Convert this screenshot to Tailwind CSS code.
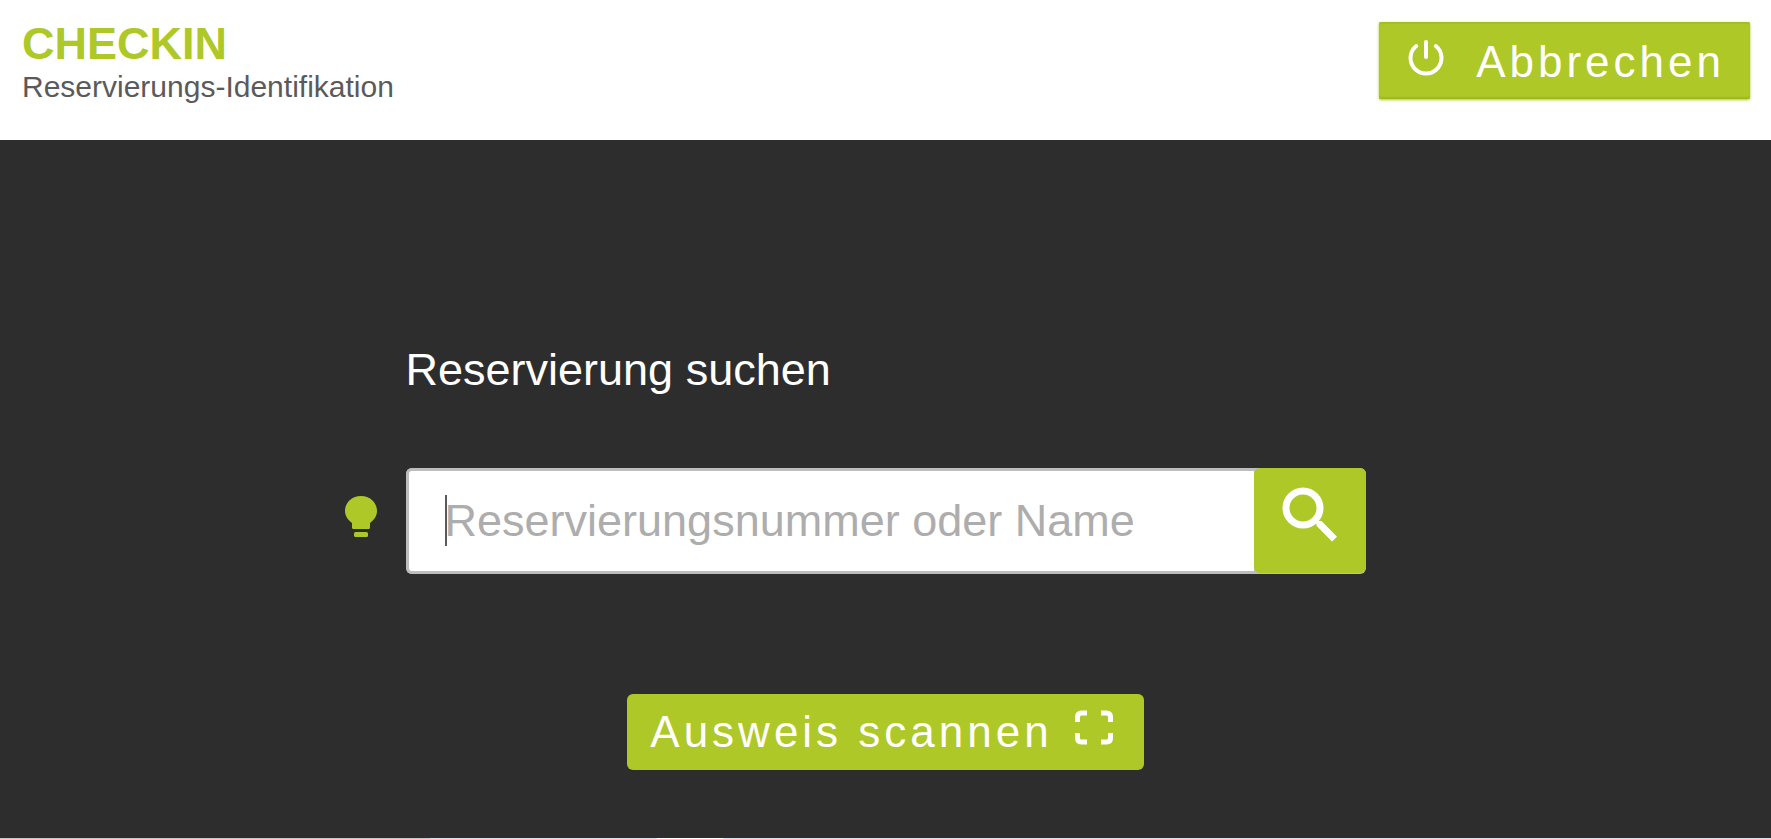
<!DOCTYPE html>
<html lang="de" class="h-full">
  <head>
    <meta charset="UTF-8" />
    <meta
      name="viewport"
      content="width=device-width, initial-scale=1.0" />
    <title>Checkin</title>

    <!-- tailwind -->
    <script src="https://cdn.jsdelivr.net/npm/@tailwindcss/browser@4"></script>
  </head>

  <body class="flex flex-col h-screen bg-white font-['Liberation_Sans',Arial,sans-serif] text-[45px] leading-[52px]">
    <header class="flex items-start justify-between pt-[22px] pb-8 pl-[22px] pr-[21px]">
      <div>
        <h1 class="font-bold leading-[44px] text-[#aec828]">CHECKIN</h1>
        <p class="text-[30px] leading-[42px] text-[#5a5a5a]">Reservierungs-Identifikation</p>
      </div>
      <button type="button" id="cancel" class="flex items-center gap-[31px] pl-7 pr-[25px] pt-3.5 pb-[11px] bg-[#aec828] text-white text-[44px] leading-[52px] tracking-[4px] rounded-xs shadow-[0_1px_3px_#aec828,inset_0_2px_1px_#a3bf1f,inset_0_-2px_1px_#9ebb1c]">
        <svg class="w-[38px] h-[38px] mb-2.5" viewBox="0 0 38 38" fill="none" stroke="currentColor" stroke-width="4" stroke-linecap="round">
          <path d="M19 4v15" />
          <path d="M9.200 8a15.500 15.500 0 1 0 19.600 0" />
        </svg>
        Abbrechen
      </button>
    </header>

    <main class="flex flex-col flex-grow items-center pt-[204px] bg-[#2d2d2d]">
      <form id="search" class="relative w-full max-w-[960px]">
        <label for="reservation" class="block text-white">Reservierung suchen</label>
        <!-- hint -->
        <svg class="absolute right-full bottom-[37px] mr-[29px] w-8 h-[41px]" viewBox="0 0 32 41" fill="#aec828">
          <path d="M16 0c9 0 16 6.500 16 15 0 5-3 9-7 12v4.500q0 1.500-1.500 1.500h-15Q7 33 7 31.500V27c-4-3-7-7-7-12C0 6.500 7 0 16 0z" />
          <rect x="9" y="36" width="14" height="5" rx="1.500" />
        </svg>
        <div class="relative flex mt-[72px] bg-[#bdbdbd] rounded-md">
          <input type="text" id="reservation" class="flex-grow min-w-0 h-[106px] pl-9 border-3 border-r-0 border-[#bdbdbd] rounded-l-md bg-white text-[#5a5a5a] placeholder:text-[#adadad] caret-transparent outline-none" placeholder="Reservierungsnummer oder Name" autofocus />
          <!-- caret -->
          <span class="absolute top-[27px] left-[39px] w-0.5 h-[51px] bg-[#5a5a5a] pointer-events-none"></span>
          <button type="submit" aria-label="Suchen" class="flex justify-center w-28 h-[105px] pt-[19px] bg-[#aec828] rounded-md">
            <svg class="w-14 h-14" viewBox="0 0 56 56">
              <circle cx="21" cy="21" r="17" fill="none" stroke="#fff" stroke-width="7" />
              <path d="M34.500 36l1.500-2h3.500L55 49.700 50 54.500 34.500 38.700zM31 33l4-3 2 5-3 2z" fill="#fff" />
            </svg>
          </button>
        </div>
      </form>
      <button type="button" id="scan" class="flex items-center gap-[22px] mt-[120px] pl-[23px] pr-[31px] py-3 bg-[#aec828] text-white text-[44px] leading-[52px] tracking-[4px] rounded-md">
        Ausweis scannen
        <svg class="w-[38px] h-[36px] mb-2" viewBox="0 0 38 36" fill="none" stroke="currentColor" stroke-width="5">
          <path d="M2.500 12V7q0-4 4-4H12M26 3h5.500q4 0 4 4v5M35.500 23v5q0 4-4 4H26M12 32H6.500q-4 0-4-4v-5" />
        </svg>
      </button>
    </main>

    <footer class="flex h-px bg-[#d8e4e8]">
      <div class="w-[430px] bg-[#c8c8c8]"></div>
      <div class="w-[66px] ml-[227px] bg-white"></div>
    </footer>
  </body>
</html>
